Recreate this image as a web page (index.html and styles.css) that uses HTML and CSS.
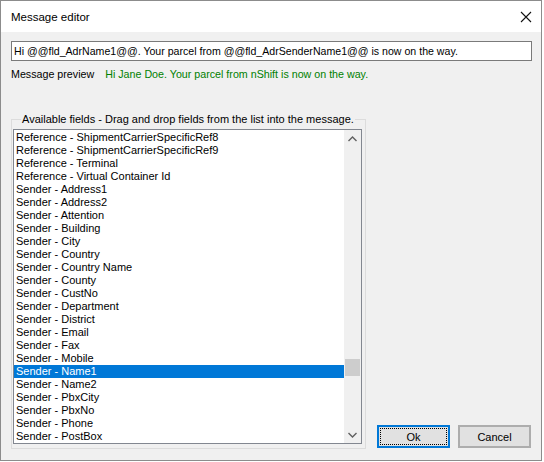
FILE: index.html
```html
<!DOCTYPE html>
<html>
<head>
<meta charset="utf-8">
<link rel="stylesheet" href="styles.css">
</head>
<body>
<div class="window">
  <div class="titlebar">
    <span class="title">Message editor</span>
    <svg class="close" width="12" height="12" viewBox="0 0 12 12"><path d="M1 1 L11 11 M11 1 L1 11" stroke="#111" stroke-width="1.1" fill="none"/></svg>
  </div>
  <div class="content">
    <div class="input">Hi @@fld_AdrName1@@. Your parcel from @@fld_AdrSenderName1@@ is now on the way.</div>
    <div class="preview">
      <span class="label">Message preview</span>
      <span class="green">Hi Jane Doe. Your parcel from nShift is now on the way.</span>
    </div>
    <div class="bottom">
      <fieldset class="group">
        <legend>Available fields - Drag and drop fields from the list into the message.</legend>
        <div class="listbox">
          <div class="items">
            <div class="item">Reference - ShipmentCarrierSpecificRef8</div>
            <div class="item">Reference - ShipmentCarrierSpecificRef9</div>
            <div class="item">Reference - Terminal</div>
            <div class="item">Reference - Virtual Container Id</div>
            <div class="item">Sender - Address1</div>
            <div class="item">Sender - Address2</div>
            <div class="item">Sender - Attention</div>
            <div class="item">Sender - Building</div>
            <div class="item">Sender - City</div>
            <div class="item">Sender - Country</div>
            <div class="item">Sender - Country Name</div>
            <div class="item">Sender - County</div>
            <div class="item">Sender - CustNo</div>
            <div class="item">Sender - Department</div>
            <div class="item">Sender - District</div>
            <div class="item">Sender - Email</div>
            <div class="item">Sender - Fax</div>
            <div class="item">Sender - Mobile</div>
            <div class="item selected">Sender - Name1</div>
            <div class="item">Sender - Name2</div>
            <div class="item">Sender - PbxCity</div>
            <div class="item">Sender - PbxNo</div>
            <div class="item">Sender - Phone</div>
            <div class="item">Sender - PostBox</div>
          </div>
          <div class="scrollbar">
            <div class="arrow">
              <svg width="9" height="6" viewBox="0 0 9 6"><path d="M0.5 5 L4.5 1 L8.5 5" stroke="#606060" stroke-width="1.4" fill="none"/></svg>
            </div>
            <div class="track"><div class="thumb"></div></div>
            <div class="arrow">
              <svg width="9" height="6" viewBox="0 0 9 6"><path d="M0.5 1 L4.5 5 L8.5 1" stroke="#606060" stroke-width="1.4" fill="none"/></svg>
            </div>
          </div>
        </div>
      </fieldset>
      <div class="buttons">
        <button class="btn default">Ok</button>
        <button class="btn">Cancel</button>
      </div>
    </div>
  </div>
</div>
</body>
</html>
```
FILE: styles.css
```css
html, body {
  margin: 0;
  padding: 0;
  background: #ffffff;
}
body {
  font-family: "Liberation Sans", Arial, sans-serif;
  font-size: 11px;
  color: #000;
}
.window {
  width: 542px;
  height: 461px;
  box-sizing: border-box;
  border: 1px solid #8c8c8c;
  display: flex;
  flex-direction: column;
}
.titlebar {
  height: 31px;
  flex: none;
  background: #fff;
  display: flex;
  align-items: center;
  justify-content: space-between;
  padding: 0 9px 0 10px;
}
.title {
  font-family: "Liberation Sans", Arial, sans-serif;
  font-size: 11.5px;
  color: #000;
  margin-top: 1px;
}
.close {
  margin-top: 1px;
}
.content {
  flex: 1;
  background: #f0f0f0;
  padding: 9px 9px 11px 10px;
  display: flex;
  flex-direction: column;
}
.input {
  height: 20px;
  box-sizing: border-box;
  border: 1px solid #7a7a7a;
  background: #fff;
  line-height: 18px;
  padding-left: 2px;
  font-size: 10.6px;
  white-space: nowrap;
  overflow: hidden;
}
.preview {
  margin-top: 7px;
  height: 13px;
  line-height: 13px;
  font-size: 10.7px;
  display: flex;
  gap: 11px;
  white-space: nowrap;
}
.green {
  color: #008000;
}
.bottom {
  margin-top: 32px;
  flex: 1;
  display: flex;
  align-items: flex-end;
}
.group {
  margin: 0;
  padding: 3px 3px 4px 1px;
  width: 355px;
  box-sizing: border-box;
  border: 1px solid #dcdcdc;
  align-self: stretch;
  display: flex;
  flex-direction: column;
  min-width: 0;
}
.group legend {
  padding: 0 1px;
  margin-left: 8px;
  line-height: 13px;
  white-space: nowrap;
}
.listbox {
  flex: 1;
  border: 1px solid #828790;
  background: #fff;
  display: flex;
  padding: 1px 0 0 0;
  overflow: hidden;
}
.items {
  flex: 1;
  min-width: 0;
}
.item {
  height: 13px;
  line-height: 13px;
  padding-left: 2px;
  white-space: nowrap;
}
.item.selected {
  background: #0078d7;
  color: #fff;
}
.scrollbar {
  width: 17px;
  flex: none;
  background: #f0f0f0;
  display: flex;
  flex-direction: column;
  margin-top: -1px;
}
.arrow {
  height: 17px;
  display: flex;
  align-items: center;
  justify-content: center;
}
.track {
  flex: 1;
  display: flex;
  flex-direction: column;
  padding-top: 212px;
}
.thumb {
  height: 17px;
  margin: 0 1px;
  background: #cdcdcd;
}
.buttons {
  display: flex;
  gap: 8px;
  margin-left: 11px;
  margin-bottom: 1px;
}
.btn {
  position: relative;
  width: 73px;
  height: 23px;
  box-sizing: border-box;
  border: 2px solid #adadad;
  background: #e1e1e1;
  font-family: "Liberation Sans", Arial, sans-serif;
  font-size: 11px;
  color: #000;
  padding: 0;
  margin: 0;
}
.btn.default {
  border-color: #0078d7;
}
.btn.default::after {
  content: "";
  position: absolute;
  left: 1px;
  top: 1px;
  right: 1px;
  bottom: 1px;
  border: 1px dotted #000;
}
```
